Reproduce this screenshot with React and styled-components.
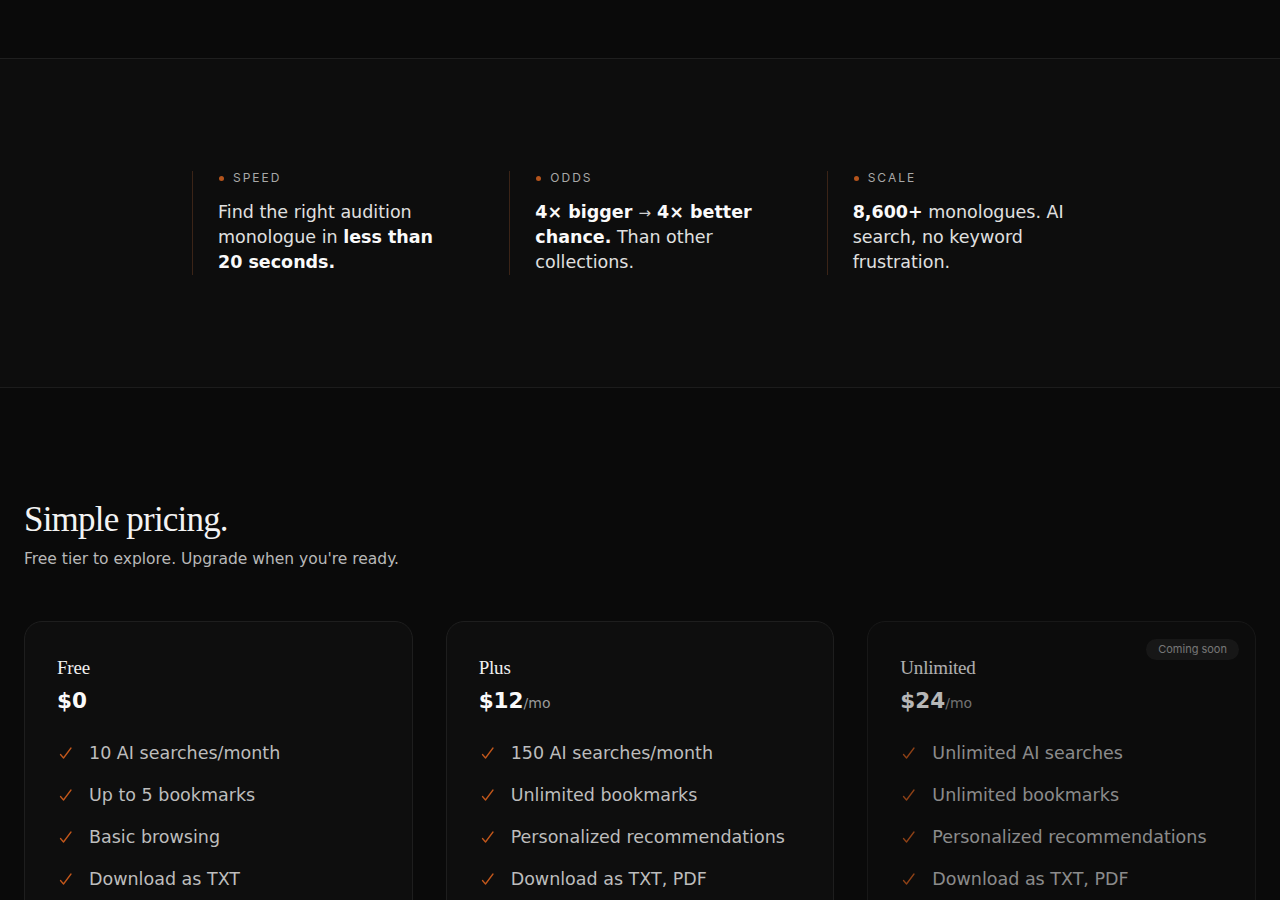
import styled, { createGlobalStyle } from 'styled-components';

const GlobalStyle = createGlobalStyle`
  html, body {
    margin: 0;
    padding: 0;
    background: #0a0a0a;
    color: #ededed;
    font-family: 'DejaVu Sans', Inter, sans-serif;
  }
  * { box-sizing: border-box; }
`;

const TopBar = styled.header`
  height: 59px;
  border-bottom: 1px solid #1f1f1f;
  background: #0a0a0a;
`;

const StatsSection = styled.section`
  background: #0d0d0d;
  border-bottom: 1px solid #1c1c1c;
  padding: 112px 24px 112px;
`;

const StatsGrid = styled.div`
  max-width: 896px;
  margin: 0 auto;
  display: grid;
  grid-template-columns: repeat(3, 1fr);
  gap: 56px;
`;

const Stat = styled.div`
  border-left: 1px solid #3b2417;
  padding: 0 0 0 25px;
`;

const StatLabel = styled.div`
  display: flex;
  align-items: center;
  gap: 9px;
  font-family: Inter, sans-serif;
  font-size: 12px;
  letter-spacing: 2px;
  color: #a8a8a8;
  line-height: 14px;
  margin-bottom: 15px;

  &::before {
    content: '';
    width: 5px;
    height: 5px;
    border-radius: 50%;
    background: #b4541c;
    margin-left: 1px;
  }
`;

const StatText = styled.p`
  margin: 0;
  font-size: 17.5px;
  line-height: 25px;
  color: #e0e0e0;

  strong {
    font-weight: 700;
    color: #fafafa;
  }
`;

const Arrow = styled.span`
  font-weight: 400;
  font-size: 15px;
  line-height: 1;
  color: #d0d0d0;
`;

const Pricing = styled.section`
  padding: 110px 24px 0;
`;

const Heading = styled.h2`
  margin: 0;
  font-family: 'Liberation Serif', 'DejaVu Serif', serif;
  font-weight: 400;
  font-size: 35px;
  line-height: 44px;
  color: #f3f3f3;
  letter-spacing: -0.8px;
`;

const Sub = styled.p`
  margin: 7px 0 0;
  font-size: 15.5px;
  line-height: 20px;
  color: #b8b8b8;
`;

const Cards = styled.div`
  margin-top: 52px;
  display: grid;
  grid-template-columns: repeat(3, 1fr);
  gap: 33px;
`;

const Card = styled.div`
  position: relative;
  background: #0e0e0e;
  border: 1px solid #1e1e1e;
  border-radius: 18px;
  padding: 34px 32px 40px;
  min-height: 320px;
  opacity: ${(p) => (p.$dim ? 0.72 : 1)};
`;

const Badge = styled.span`
  position: absolute;
  top: 17px;
  right: 16px;
  background: #1d1d1d;
  color: #a0a0a0;
  font-family: Inter, sans-serif;
  font-size: 11px;
  line-height: 21px;
  padding: 0 12px;
  border-radius: 999px;
`;

const PlanName = styled.div`
  font-family: 'Liberation Serif', 'DejaVu Serif', serif;
  font-size: 19px;
  line-height: 24px;
  letter-spacing: -0.2px;
  color: #f0f0f0;
`;

const Price = styled.div`
  margin-top: 6px;
  font-size: 21.5px;
  font-weight: 700;
  line-height: 30px;
  height: 30px;
  color: #fafafa;

  span {
    font-size: 14px;
    font-weight: 400;
    line-height: 1;
    color: #9a9a9a;
  }
`;

const Features = styled.ul`
  list-style: none;
  margin: 26px 0 0;
  padding: 0;
  display: flex;
  flex-direction: column;
  gap: 20px;
`;

const Feature = styled.li`
  display: flex;
  align-items: center;
  gap: 14px;
  font-size: 17.5px;
  line-height: 22px;
  color: #bdbdbd;
`;

const Check = () => (
  <svg width="18" height="18" viewBox="0 0 18 18" fill="none">
    <path d="M3.5 10.5 L6.5 14 L14 4" stroke="#c2571b" strokeWidth="1.3" strokeLinecap="round" strokeLinejoin="round" />
  </svg>
);

const stats = [
  {
    label: 'SPEED',
    text: (
      <>
        Find the right audition monologue in <strong>less than 20 seconds.</strong>
      </>
    ),
  },
  {
    label: 'ODDS',
    text: (
      <>
        <strong>
          4× bigger <Arrow>→</Arrow> 4× better chance.
        </strong>{' '}
        Than other collections.
      </>
    ),
  },
  {
    label: 'SCALE',
    text: (
      <>
        <strong>8,600+</strong> monologues. AI search, no keyword frustration.
      </>
    ),
  },
];

const plans = [
  {
    name: 'Free',
    price: '$0',
    features: ['10 AI searches/month', 'Up to 5 bookmarks', 'Basic browsing', 'Download as TXT'],
  },
  {
    name: 'Plus',
    price: '$12',
    per: '/mo',
    features: ['150 AI searches/month', 'Unlimited bookmarks', 'Personalized recommendations', 'Download as TXT, PDF'],
  },
  {
    name: 'Unlimited',
    price: '$24',
    per: '/mo',
    soon: true,
    features: ['Unlimited AI searches', 'Unlimited bookmarks', 'Personalized recommendations', 'Download as TXT, PDF'],
  },
];

export default function App() {
  return (
    <>
      <GlobalStyle />
      <TopBar />
      <StatsSection>
        <StatsGrid>
          {stats.map((s) => (
            <Stat key={s.label}>
              <StatLabel>{s.label}</StatLabel>
              <StatText>{s.text}</StatText>
            </Stat>
          ))}
        </StatsGrid>
      </StatsSection>
      <Pricing>
        <Heading>Simple pricing.</Heading>
        <Sub>Free tier to explore. Upgrade when you're ready.</Sub>
        <Cards>
          {plans.map((p) => (
            <Card key={p.name} $dim={p.soon}>
              {p.soon && <Badge>Coming soon</Badge>}
              <PlanName>{p.name}</PlanName>
              <Price>
                {p.price}
                {p.per && <span>{p.per}</span>}
              </Price>
              <Features>
                {p.features.map((f) => (
                  <Feature key={f}>
                    <Check />
                    {f}
                  </Feature>
                ))}
              </Features>
            </Card>
          ))}
        </Cards>
      </Pricing>
    </>
  );
}
